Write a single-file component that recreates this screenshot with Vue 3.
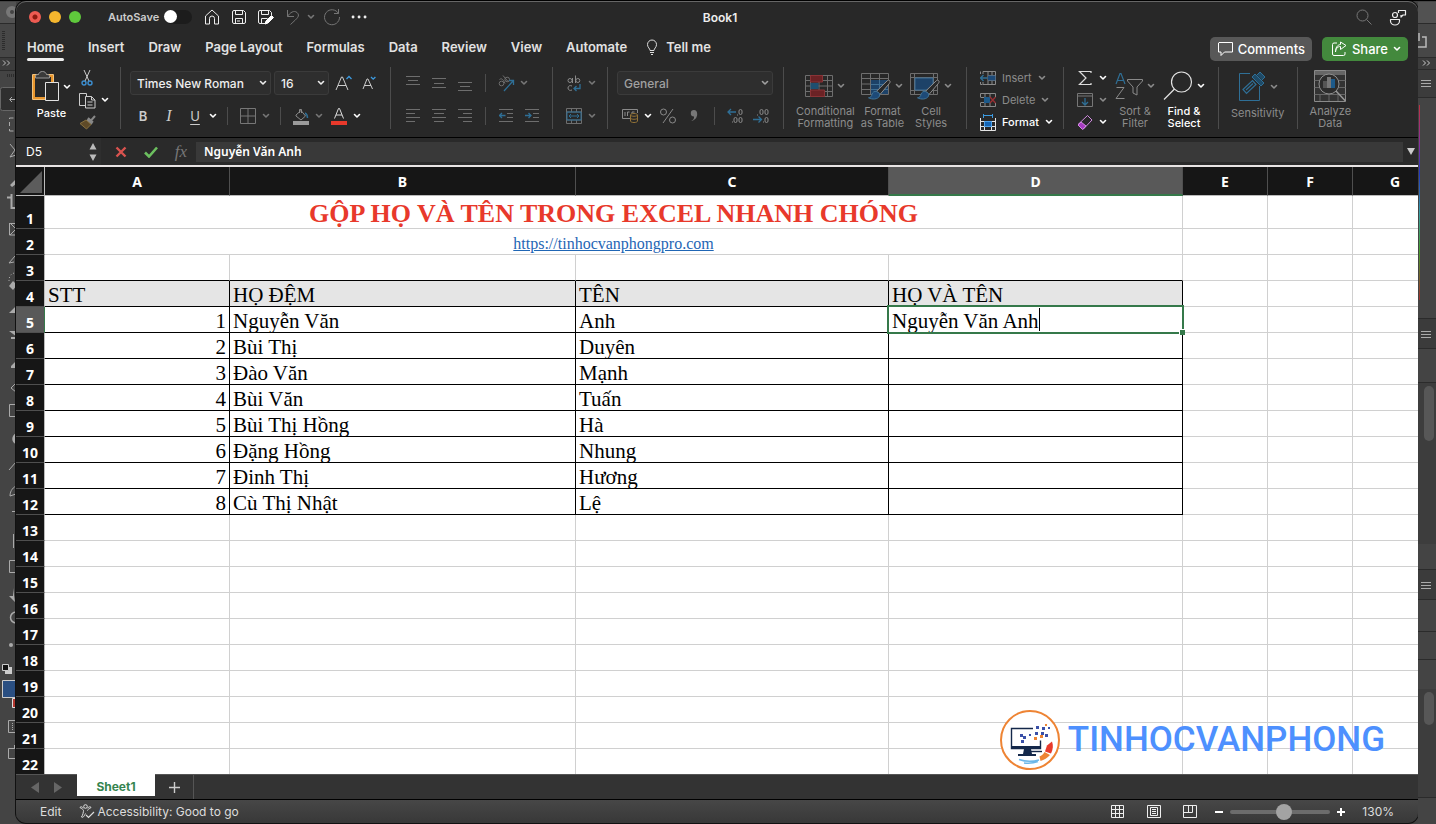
<script setup>
import { h, ref } from 'vue'

const g = '#8a8a8a'
const d = '#6e6e6e'
const b = '#2f6f96'
const grid = (c) => `<path d="M.5 .5h27v21h-27zM.5 5.5h27M.5 11h27M.5 16.5h27M5.5 .5v21M14 .5v21M22.5 .5v21" stroke="${c}"/>`
const brush = `<path d="M28.5 7.5c1 1 .6 2-.2 3L19 21.500l-3.500-3.200L26 8c1-.9 1.800-1.200 2.500-.5z" fill="#282828" stroke="#8f8f8f"/><path d="M15.500 18.500c-2-.5-4 .5-4.500 3-.4 2-1.500 3-3.500 3.300 3.500 2 9.500 1.700 11-1.800.5-1.400 0-2.500-.7-3.200z" fill="#1d4a78" stroke="#3f7296"/>`

const icons = {
  chev: [8, 6, `<path d="M1.500 1.500L4 4l2.500-2.500" stroke="currentColor" stroke-width="1.600" stroke-linecap="round" stroke-linejoin="round"/>`],
  home: [16, 16, `<path d="M1.500 7L8 1l6.500 6v8h-4V9.500a2.500 2.500 0 0 0-5 0V15h-4z" stroke="#eee" stroke-linejoin="round"/>`],
  save: [16, 16, `<path d="M3 1.500h9.500l2 2V13a1.500 1.500 0 0 1-1.500 1.500H3A1.500 1.500 0 0 1 1.500 13V3A1.500 1.500 0 0 1 3 1.500zM4.500 1.500v4h7v-4M4.500 14.500v-5h7v5M6 12h3" stroke="#eee"/>`],
  saveEdit: [18, 16, `<path d="M8 14.500H3A1.500 1.500 0 0 1 1.500 13V3A1.500 1.500 0 0 1 3 1.500h9.500l2 2V6M4.500 1.500v4h7v-4M4.500 14v-4.500h6" stroke="#eee"/><path d="M8 15l1-3 5.500-5.500 2 2L11 14z" fill="#fff" stroke="#fff"/>`],
  undo: [16, 16, `<path d="M2.500 1v6.500H9M2.500 7.500C5 3.500 9 1 12 3.500c3.500 3.500.5 5.500-6.500 12" stroke="#757575"/>`],
  redo: [18, 18, `<path d="M15.500 1v4.500H11M15.500 5.500A7.500 7.500 0 1 0 16.500 9" stroke="#757575"/>`],
  dots: [16, 4, `<path d="M2 2h.1M8 2h.1M14 2h.1" stroke="#eee" stroke-width="2.800" stroke-linecap="round"/>`],
  search: [16, 16, `<circle cx="6.500" cy="6.500" r="5.500" stroke="#777"/><path d="M10.500 10.500l5 5" stroke="#777"/>`],
  people: [18, 18, `<circle cx="6" cy="7" r="2.500" stroke="#eee" stroke-width="1.200"/><path d="M1.500 11.500h9v1.500a4.500 4 0 0 1-9 0zM9.500 5V2.500h7V7H14l-2 2V7" stroke="#eee" stroke-width="1.200" stroke-linejoin="round"/>`],
  bulb: [12, 16, `<path d="M4 11.500c0-2-2.500-3-2.500-6a4.500 4.500 0 0 1 9 0c0 3-2.500 4-2.500 6zM4 13.500h4M5 15.500h2" stroke="#ddd"/>`],
  comment: [17, 16, `<path d="M2 1.500h13.500v9.500H7.500L4 14.500V11H1.500V2z" stroke="#fff" stroke-linejoin="round"/>`],
  share: [16, 16, `<path d="M6 2H3A1.500 1.500 0 0 0 1.500 3.500v9.500A1.500 1.500 0 0 0 3 14.500h9.500A1.500 1.500 0 0 0 14 13v-2M4.500 11c.5-4 2.500-5.500 5-5.500v3L15 4.500 9.500 1v2.500C6 4 4.500 7 4.500 11z" stroke="#fff" stroke-linejoin="round"/>`],
  paste: [28, 32, `<path d="M2 5h18v22H2z" stroke="#e8962e" stroke-width="2"/><path d="M.5 3.500h21v25H.5z" stroke="#f2c27c"/><path d="M3.500 7V5c0-1 1-1.500 3-1.500C7 1.500 8.500.5 10.500.5s3.500 1 4 3c2 0 3 .5 3 1.500v2z" fill="#3a3a3a" stroke="#999"/><path d="M13.500 11.500h13v18h-13z" fill="#282828" stroke="#e2e2e2"/>`],
  cut: [12, 18, `<path d="M3 1l5 11M9 1L4 12" stroke="#ccc"/><circle cx="3" cy="14" r="2" stroke="#3d8fd1" stroke-width="1.400"/><circle cx="9" cy="14" r="2" stroke="#3d8fd1" stroke-width="1.400"/>`],
  copy: [17, 17, `<path d="M6 13.500H.5V1.500h7v3M6.500 4.500h6l3.500 3.500v8H6.500zM12.500 4.500V8H16M8.500 10h5M8.500 13h5" stroke="#ccc"/>`],
  painter: [17, 15, `<path d="M16 1l-4 4.500M9 3l5 4.500M8 4.500L13 9" stroke="#888" stroke-width="2"/><path d="M7 5L1 8.500 7.500 14l4.500-4.500z" fill="#5e4a28" stroke="#87703f"/>`],
  growA: [17, 18, `<path d="M1 16L6.500 3h1L13 16M3 11.500h8" stroke="#ccc"/><path d="M11.500 5L14 2.500 16.500 5" stroke="#3d9be0" stroke-width="1.300"/>`],
  shrinkA: [14, 16, `<path d="M1 14L5 4h1l4.500 10M2.500 10.500h6.500" stroke="#ccc"/><path d="M9 2l2.200 2.200L13.400 2" stroke="#3d9be0" stroke-width="1.300"/>`],
  border: [16, 16, `<path d="M.5 .5h15v15H.5zM8 .5v15M.5 8h15" stroke="#777"/>`],
  bucket: [16, 17, `<path d="M3 7l5-4.500L12.500 8 8 12 3 8zM6.500 5V1.500h2V5" stroke="#8a8a8a"/><path d="M12 5c2 1 2.500 3 2.500 5" stroke="#2f6f96" stroke-width="1.500"/><path d="M0 13h16v4H0z" fill="#9a9a9a"/>`],
  fontColor: [16, 17, `<path d="M3.500 10.500L7.500 .5h1l4 10M5 7h6" stroke="#ddd"/><path d="M0 13h16v4H0z" fill="#e8392b"/>`],
  top: [14, 16, `<path d="M0 1.500h14M2 5.500h10M0 9.500h14" stroke="${d}"/>`],
  mid: [14, 16, `<path d="M0 3.500h14M2 8.500h10M0 12.500h14" stroke="${d}"/>`],
  bot: [14, 16, `<path d="M0 7.500h14M2 11.500h10M0 15.500h14" stroke="${d}"/>`],
  left: [14, 14, `<path d="M0 .5h14M0 4.500h9M0 8.500h14M0 12.500h9" stroke="${d}"/>`],
  center: [14, 14, `<path d="M0 .5h14M2 4.500h10M0 8.500h14M2 12.500h10" stroke="${d}"/>`],
  right: [14, 14, `<path d="M0 .5h14M5 4.500h9M0 8.500h14M5 12.500h9" stroke="${d}"/>`],
  orient: [17, 17, `<circle cx="3.500" cy="8.500" r="2.300" stroke="${d}"/><path d="M1.500 4.500c2-1.500 3.500-.5 5.500 4M5 .5l5 6" stroke="${d}"/><circle cx="9.200" cy="4.500" r="2.300" stroke="${d}"/><path d="M6 16L15.500 5.500M11 5.500h4.500V10" stroke="${b}" stroke-width="1.300"/>`],
  outdent: [14, 14, `<path d="M0 .5h14M8 4.500h6M8 8.500h6M0 12.500h14" stroke="${d}"/><path d="M.5 6.500h6M3 4L.5 6.500 3 9" stroke="${b}" stroke-width="1.300"/>`],
  indent: [14, 14, `<path d="M0 .5h14M8 4.500h6M8 8.500h6M0 12.500h14" stroke="${d}"/><path d="M0 6.500h6M3.500 4L6 6.500 3.500 9" stroke="${b}" stroke-width="1.300"/>`],
  wrap: [14, 17, `<circle cx="3" cy="5.500" r="2" stroke="${g}"/><path d="M5.500 3v5M8.500 .5V8" stroke="${g}"/><circle cx="10.800" cy="5.500" r="2" stroke="${g}"/><path d="M5 11c-2-1-4 0-4 2s2 3 4 2" stroke="${g}"/><path d="M13 9v4.500H7M9.500 11L7 13.500 9.500 16" stroke="${b}" stroke-width="1.300"/>`],
  merge: [16, 16, `<path d="M.5 .5h15v15H.5zM.5 4h15M.5 12h15M5.500 .5V4M10.500 .5V4M5.500 12v3.500M10.500 12v3.500" stroke="${d}"/><path d="M1 4h14v8H1zM3 8h10M5 6L3 8l2 2M11 6l2 2-2 2" stroke="${b}"/>`],
  money: [17, 14, `<path d="M8 9.500H.5v-9h15V4M3 3v4M5.500 7V3h2M10 5.500V3h2.500" stroke="${g}"/><path d="M8.500 6c0-2 7-2 7 0v6c0 2-7 2-7 0zM8.500 6c0 1.700 7 1.700 7 0M8.500 9c0 1.700 7 1.700 7 0" fill="#282828" stroke="#937338"/>`],
  percent: [16, 16, `<circle cx="3.500" cy="4" r="3" stroke="${g}"/><circle cx="12.500" cy="12" r="3" stroke="${g}"/><path d="M13 1L3 15" stroke="${g}"/>`],
  comma: [10, 14, `<path d="M5 1a3.200 3.200 0 0 0 0 6.400c.3 2-.8 3.600-2.800 4.600 4-.5 6-4 6-7C8.200 2.500 7 1 5 1z" fill="#777"/>`],
  decInc: [16, 16, `<path d="M1 4h8M4 1L1 4l3 3" stroke="${b}" stroke-width="1.300"/><path d="M5 14h1M10 7h1" stroke="${g}"/><rect x="12" y="1.500" width="3" height="5" rx="1.500" stroke="${g}"/><rect x="7" y="9.500" width="3" height="5" rx="1.500" stroke="${g}"/><rect x="12" y="9.500" width="3" height="5" rx="1.500" stroke="${g}"/>`],
  decDec: [16, 16, `<path d="M0 11.500h8M5.500 8.500l3 3-3 3" stroke="${b}" stroke-width="1.300"/><path d="M4 7h1M10 14h1" stroke="${g}"/><rect x="7" y="1.500" width="3" height="5" rx="1.500" stroke="${g}"/><rect x="12" y="1.500" width="3" height="5" rx="1.500" stroke="${g}"/><rect x="12" y="9.500" width="3" height="5" rx="1.500" stroke="${g}"/>`],
  cond: [28, 26, `<g transform="translate(0 2)">${grid(d)}<path d="M5.500 .5h12v6.500h-12zM5.500 15h14v6.500h-14z" fill="#6b2225" stroke="#8a3336"/><path d="M5.500 8h8v6h-8z" fill="#1f4f70"/></g>`],
  fmtTable: [30, 28, `<g transform="translate(0 1)"><path d="M.5 .5h27v21h-27zM.5 5.500h27M.5 11h27M.5 16.500h27M9.500 .5v21M18.500 .5v21" stroke="${d}"/><path d="M10 7h17v14H10z" fill="#1d4268"/><path d="M10 11.500h17M10 16.500h17M18.500 7v14" stroke="#3f6f94"/>${brush}</g>`],
  cellStyles: [30, 28, `<g transform="translate(0 1)"><path d="M.5 .5h27v21h-27zM.5 4.500h27M.5 17.500h27M4.500 .5v21M23.500 .5v21" stroke="${d}"/><path d="M5 5h18v12H5z" fill="#1d4268" stroke="#3f6f94"/>${brush}</g>`],
  insert: [16, 14, `<path d="M3 3V.5h12.500v13H3V11M.5 .5V3M.5 11v2.500h2M8 .5v13M12 .5v13M8 4.500h7.500M8 9.500h7.500" stroke="${g}"/><path d="M8 4.500h7.500v5H8z" fill="#1d4a78"/><path d="M.5 7h7M3.500 4l-3 3 3 3" stroke="${b}" stroke-width="1.300"/>`],
  del: [16, 14, `<path d="M.5 4V.5h15V4M.5 10v3.500h15V10M5 .5V4M10 .5V4M5 10v3.500M10 10v3.500M.5 4.500H4M.5 9.500H4" stroke="${g}"/><path d="M4 4h6v6H4z" fill="#1d5a8a"/><path d="M10 4l5.500 6M15.500 4L10 10" stroke="#9c3034" stroke-width="1.300"/>`],
  format: [16, 17, `<path d="M3.500 0v4M12.500 0v4M3.500 1.500h9" stroke="#3d9be0"/><path d="M.5 4v12.500h15V4M.5 7.500h15M.5 12.500h15M4.500 7v9M11.500 7v9" stroke="#e4e4e4"/><path d="M4.500 7.500h7v5h-7z" fill="#1464b4" stroke="#4ca0e8"/>`],
  sum: [14, 16, `<path d="M13 3V1.500H1.500L8 8l-6.500 6.500H13V13" stroke="#ddd" stroke-width="1.200"/>`],
  fill: [16, 14, `<path d="M.5 .5h15v13H.5zM.5 3h15" stroke="#777"/><path d="M8 5v7M5 9l3 3 3-3" stroke="${b}" stroke-width="1.300"/>`],
  eraser: [16, 15, `<path d="M10.500 .5l4.500 4.500-8.500 9L1 9.500z" stroke="#d08be0"/><path d="M4 7L1 10l4.500 4.500L9 11z" fill="#a73bc0" stroke="#d08be0"/>`],
  sort: [28, 28, `<path d="M1 12L5 1.500h1L10 12M2.500 8.500h6" stroke="${b}" stroke-width="1.200"/><path d="M1.500 15.500h7.500L1 26.500h8.500" stroke="${g}"/><path d="M12.500 7.500h15v1.500l-5.500 6v8l-4-2v-6L12.500 9z" stroke="${g}"/>`],
  find: [30, 30, `<circle cx="18.500" cy="11" r="10" stroke="#e2e2e2" stroke-width="1.200"/><path d="M11.500 18L1 28.500" stroke="#e2e2e2" stroke-width="1.200"/>`],
  sens: [28, 32, `<path d="M12 2.500H1.500v27h20V15" stroke="${b}"/><path d="M5 18.500l9.500-9 3.500 4-9.500 9zM8 19l7-6.500" stroke="${b}" stroke-width="1.200"/><path d="M14 6l3-3 9 9-3 3zM19 4l3-3 5 5-3 3" fill="#1f4a66" stroke="${b}"/>`],
  analyze: [32, 32, `<path d="M.5 .5h31v31H.5z" fill="#333" stroke="${g}"/><path d="M1 3h30" stroke="#666" stroke-width="4"/><path d="M.5 10.500h31M.5 17.500h31M.5 24.500h31M6 24v7M15 24v7M24 24v7" stroke="#666"/><circle cx="15" cy="14" r="10" fill="#2c2c2c" stroke="#909090"/><path d="M22 21l9.500 10" stroke="#999" stroke-width="1.500"/><path d="M9 11h4v7H9z" fill="#555"/><path d="M13 7h4v11h-4z" fill="#777"/><path d="M17 9h4v9h-4z" fill="#1d5a8a"/>`],
  acc: [16, 15, `<circle cx="6.500" cy="2.500" r="1.800" stroke="#ddd"/><path d="M1 3.500c2 1.500 3.500 2 3.500 3s-.5 4.500-2 6.500c1.500 1 2.500-.5 4-3.500M12 3.500c-2 1.500-3.500 2-3.500 3M1 3.500C1.500 2 3 3 4.500 4M12 3.500C11.500 2 10 3 8.500 4" stroke="#ddd"/><path d="M7 11l2.500 2.500L15 8" stroke="#ddd" stroke-width="1.200"/>`],
  vGrid: [14, 14, `<path d="M.5 .5h12v12H.5zM4.500 .5v12M8.500 .5v12M.5 4.500h12M.5 8.500h12" stroke="#eee"/>`],
  vPage: [14, 14, `<path d="M.5 .5h13v12H.5zM3.500 2.500h7v8h-7zM5 4.500h4M5 6.500h4M5 8.500h4" stroke="#eee"/>`],
  vBreak: [14, 14, `<path d="M.5 .5h13v12H.5zM5.500 .5v7M.5 7.500h9M9.500 .5v7" stroke="#eee"/>`],
  cancel: [12, 12, `<path d="M1.500 1.500l9 9M10.500 1.500l-9 9" stroke="#d9534f" stroke-width="2.400"/>`],
  accept: [14, 12, `<path d="M1 6.500L5 10.500 13 1.500" stroke="#6cbf5f" stroke-width="2.600"/>`],
  updown: [8, 18, `<path d="M4 0l3.500 6.500h-7zM4 18L.5 11.500h7z" fill="#bbb"/>`]
}

const Icon = (props) => {
  const [w, ht, body] = icons[props.n]
  return h('svg', { width: w, height: ht, viewBox: `0 0 ${w} ${ht}`, fill: 'none', 'aria-hidden': 'true', innerHTML: body })
}
Icon.props = ['n']

const tabs = ['Home', 'Insert', 'Draw', 'Page Layout', 'Formulas', 'Data', 'Review', 'View', 'Automate']
const columns = ['A', 'B', 'C', 'D', 'E', 'F', 'G']
const people = [
  ['Nguyễn Văn', 'Anh'],
  ['Bùi Thị', 'Duyên'],
  ['Đào Văn', 'Mạnh'],
  ['Bùi Văn', 'Tuấn'],
  ['Bùi Thị Hồng', 'Hà'],
  ['Đặng Hồng', 'Nhung'],
  ['Đinh Thị', 'Hương'],
  ['Cù Thị Nhật', 'Lệ']
]
const emptyRows = [13, 14, 15, 16, 17, 18, 19, 20, 21, 22]
const entry = ref('Nguyễn Văn Anh')
const font = ref('Times New Roman')
const size = ref('16')
const numberFormat = ref('General')
const autosave = ref(false)
const zoom = ref(54)
</script>

<template>
  <div class="desktop">
    <div class="strip">
      <svg width="16" height="824" viewBox="0 0 16 824" fill="none" aria-hidden="true">
        <path d="M0 2h16v21H0z" fill="#525252" />
        <path d="M0 24h16v33H0z" fill="#474747" />
        <path d="M0 58h16v12H0z" fill="#3c3c3c" />
        <path d="M0 23.500h16M0 57.500h16M0 70.500h16" stroke="#2b2b2b" />
        <circle cx="12" cy="12" r="6" fill="#777" /><circle cx="12" cy="12" r="2" fill="#444" />
        <path d="M3.500 31v19" stroke="#2c2c2c" stroke-width="3" stroke-dasharray="1 1" />
        <path d="M3 60.500l2.500 2.500L3 65.500M7 60.500L9.500 63 7 65.500" stroke="#bbb" />
        <path d="M7 75.500h9" stroke="#2c2c2c" stroke-width="3" stroke-dasharray="1 1" />
        <rect x=".5" y="87.500" width="20" height="23" rx="2" fill="#2f2f2f" stroke="#666" />
        <path d="M10 99.500h6M12 97l-2.500 2.500L12 102" stroke="#aaa" />
        <path d="M9.500 119v-1h4M9.500 122v4M9.500 129v2h4" stroke="#aaa" />
        <path d="M10 144l5 6-5 7 6-2" stroke="#aaa" />
        <path d="M10 185l6-6v5l-4 3zM10 312l6-6v7H9zM11 366l5-5v7h-5z" fill="#aaa" />
        <path d="M7 197.500h5M11.500 194v14H16" stroke="#aaa" stroke-width="2" />
        <path d="M9.500 223.500h7M9.500 223v12h7M10 223l6 6-6 6" stroke="#aaa" />
        <path d="M15 256l-6 7 5-1" stroke="#aaa" />
        <path d="M9 281c0-9 7-8 7-8" stroke="#aaa" stroke-dasharray="1 2" /><path d="M9 286l4-5 4 4-4 5z" fill="#aaa" />
        <path d="M16 332h-4l4 3M11 338h5" stroke="#aaa" stroke-width="2" />
        <path d="M16 383l-5 5 5 4M9.500 404.500h8v12h-8zM9 470l7-8M10 496c0-6 4-9 6-10M10 496l6-2M12 511.500h4M13.500 534v14M9.500 560.500h8v12h-8z" stroke="#aaa" />
        <path d="M16 433c-5 3-5 9 0 11zM13 588v8h-4l6 6z" fill="#aaa" />
        <path d="M16 612a5.500 5.500 0 0 0 0 11" stroke="#aaa" stroke-width="1.500" />
        <circle cx="11" cy="645" r="2" fill="#aaa" />
        <path d="M5 667h7v7H5z" fill="#ccc" /><path d="M2.500 664.500h6v6h-6z" fill="#111" stroke="#ccc" />
        <path d="M12.500 698.500h5v9h-5z" fill="#b3362e" stroke="#ddd" />
        <path d="M2.500 680.500h16v17h-16z" fill="#2a4f82" stroke="#ccc" />
        <path d="M8.500 720.500h9v12h-9zM8.500 748.500h9v10h-9zM14.500 745v4" stroke="#aaa" />
        <path d="M12.500 723v7" stroke="#aaa" stroke-dasharray="1 1" />
      </svg>
    </div>

    <div class="window">
      <header class="titlebar">
        <div class="title-left">
          <span class="light red"></span><span class="light amber"></span><span class="light green"></span>
          <label class="autosave">AutoSave<input v-model="autosave" type="checkbox" class="toggle" /></label>
          <button class="tool" aria-label="Home"><Icon n="home" /></button>
          <button class="tool" aria-label="Save"><Icon n="save" /></button>
          <button class="tool" aria-label="Save a copy"><Icon n="saveEdit" /></button>
          <button class="tool" aria-label="Undo"><Icon n="undo" /></button>
          <button class="arrow dim slim" aria-label="Undo options"><Icon n="chev" /></button>
          <button class="tool" aria-label="Redo"><Icon n="redo" /></button>
          <button class="tool" aria-label="More"><Icon n="dots" /></button>
        </div>
        <div class="title">Book1</div>
        <div class="title-right">
          <button class="tool" aria-label="Search"><Icon n="search" /></button>
          <button class="tool" aria-label="Presence"><Icon n="people" /></button>
        </div>
      </header>

      <nav class="tabs">
        <button v-for="t in tabs" :key="t" class="tab" :class="{ active: t === 'Home' }">{{ t }}</button>
        <button class="tab tell"><Icon n="bulb" />Tell me</button>
        <span class="grow"></span>
        <button class="pill comments"><Icon n="comment" />Comments</button>
        <button class="pill share"><Icon n="share" />Share<Icon n="chev" /></button>
      </nav>

      <div class="ribbon">
        <div class="group clip">
          <button class="big lit"><span class="pic"><Icon n="paste" /><Icon n="chev" /></span>Paste</button>
          <div class="stack">
            <button class="mini" aria-label="Cut"><span class="slot"><Icon n="cut" /></span></button>
            <button class="mini lit" aria-label="Copy"><span class="slot"><Icon n="copy" /></span><Icon n="chev" /></button>
            <button class="mini" aria-label="Format Painter"><span class="slot"><Icon n="painter" /></span></button>
          </div>
        </div>
        <div class="group rows font-group">
          <div class="row">
            <span class="drop name"><select v-model="font" aria-label="Font"><option>Times New Roman</option></select><Icon n="chev" /></span>
            <span class="drop size"><select v-model="size" aria-label="Font size"><option>16</option></select><Icon n="chev" /></span>
            <button class="ib" aria-label="Increase font size"><Icon n="growA" /></button>
            <button class="ib" aria-label="Decrease font size"><Icon n="shrinkA" /></button>
          </div>
          <div class="row">
            <button class="ib bold">B</button><button class="ib ital">I</button><button class="ib under">U</button>
            <button class="arrow" aria-label="Underline options"><Icon n="chev" /></button>
            <i class="bar"></i>
            <button class="ib" aria-label="Borders"><Icon n="border" /></button><button class="arrow dim" aria-label="Border options"><Icon n="chev" /></button>
            <i class="bar"></i>
            <button class="ib" aria-label="Fill colour"><Icon n="bucket" /></button><button class="arrow dim spaced" aria-label="Fill options"><Icon n="chev" /></button>
            <button class="ib" aria-label="Font colour"><Icon n="fontColor" /></button><button class="arrow" aria-label="Font colour options"><Icon n="chev" /></button>
          </div>
        </div>
        <div class="group rows align-group">
          <div class="row">
            <button class="ib" aria-label="Top align"><Icon n="top" /></button><button class="ib" aria-label="Middle align"><Icon n="mid" /></button><button class="ib" aria-label="Bottom align"><Icon n="bot" /></button>
            <i class="bar"></i>
            <button class="ib" aria-label="Orientation"><Icon n="orient" /></button><button class="arrow dim" aria-label="Orientation options"><Icon n="chev" /></button>
          </div>
          <div class="row">
            <button class="ib" aria-label="Align left"><Icon n="left" /></button><button class="ib" aria-label="Center"><Icon n="center" /></button><button class="ib" aria-label="Align right"><Icon n="right" /></button>
            <i class="bar"></i>
            <button class="ib" aria-label="Decrease indent"><Icon n="outdent" /></button><button class="ib" aria-label="Increase indent"><Icon n="indent" /></button>
          </div>
        </div>
        <div class="group rows wrap-group">
          <div class="row"><button class="ib" aria-label="Wrap text"><Icon n="wrap" /></button><button class="arrow dim" aria-label="Wrap options"><Icon n="chev" /></button></div>
          <div class="row"><button class="ib" aria-label="Merge"><Icon n="merge" /></button><button class="arrow dim" aria-label="Merge options"><Icon n="chev" /></button></div>
        </div>
        <div class="group rows number-group">
          <div class="row">
            <span class="drop number"><select v-model="numberFormat" aria-label="Number format"><option>General</option></select><Icon n="chev" /></span>
          </div>
          <div class="row">
            <button class="ib" aria-label="Currency"><Icon n="money" /></button><button class="arrow spaced" aria-label="Currency options"><Icon n="chev" /></button>
            <button class="ib" aria-label="Percent"><Icon n="percent" /></button><button class="ib" aria-label="Comma style"><Icon n="comma" /></button>
            <i class="bar"></i>
            <button class="ib" aria-label="Increase decimal"><Icon n="decInc" /></button><button class="ib" aria-label="Decrease decimal"><Icon n="decDec" /></button>
          </div>
        </div>
        <div class="group bigs styles-group">
          <button class="big"><span class="pic"><Icon n="cond" /><Icon n="chev" /></span>Conditional<br />Formatting</button>
          <button class="big"><span class="pic"><Icon n="fmtTable" /><Icon n="chev" /></span>Format<br />as Table</button>
          <button class="big"><span class="pic"><Icon n="cellStyles" /><Icon n="chev" /></span>Cell<br />Styles</button>
        </div>
        <div class="group cells-group">
          <div class="stack">
            <button class="mini"><Icon n="insert" />Insert<Icon n="chev" /></button>
            <button class="mini"><Icon n="del" />Delete<Icon n="chev" /></button>
            <button class="mini lit"><Icon n="format" />Format<Icon n="chev" /></button>
          </div>
        </div>
        <div class="group bigs edit-group">
          <div class="stack">
            <button class="mini lit" aria-label="AutoSum"><span class="slot"><Icon n="sum" /></span><Icon n="chev" /></button>
            <button class="mini" aria-label="Fill"><span class="slot"><Icon n="fill" /></span><Icon n="chev" /></button>
            <button class="mini lit" aria-label="Clear"><span class="slot"><Icon n="eraser" /></span><Icon n="chev" /></button>
          </div>
          <button class="big"><span class="pic"><Icon n="sort" /><Icon n="chev" /></span>Sort &amp;<br />Filter</button>
          <button class="big lit"><span class="pic"><Icon n="find" /><Icon n="chev" /></span>Find &amp;<br />Select</button>
        </div>
        <div class="group bigs">
          <button class="big"><span class="pic"><Icon n="sens" /><Icon n="chev" /></span>Sensitivity</button>
        </div>
        <div class="group bigs last">
          <button class="big"><span class="pic"><Icon n="analyze" /></span>Analyze<br />Data</button>
        </div>
      </div>

      <div class="formula">
        <div class="namebox"><input value="D5" aria-label="Name box" /><Icon n="updown" /></div>
        <button class="fbtn" aria-label="Cancel"><Icon n="cancel" /></button>
        <button class="fbtn" aria-label="Enter"><Icon n="accept" /></button>
        <button class="fbtn fx" aria-label="Insert function">fx</button>
        <input v-model="entry" class="fx-input" aria-label="Formula bar" />
        <button class="expand" aria-label="Expand formula bar"><svg width="8" height="7" viewBox="0 0 8 7"><path d="M0 0h8L4 7z" fill="#ccc" /></svg></button>
      </div>

      <main class="sheet">
        <table>
          <colgroup><col class="cn" /><col class="ca" /><col class="cb" /><col class="cc" /><col class="cd" /><col class="ce" /><col class="ce" /><col class="ce" /></colgroup>
          <thead>
            <tr>
              <th class="corner"><svg width="22" height="22" viewBox="0 0 22 22"><path d="M22 0v22H0z" fill="#5c5c5c" /></svg></th>
              <th v-for="c in columns" :key="c" :class="{ sel: c === 'D' }">{{ c }}</th>
            </tr>
          </thead>
          <tbody>
            <tr class="first"><th>1</th><td colspan="4" class="heading">GỘP HỌ VÀ TÊN TRONG EXCEL NHANH CHÓNG</td><td></td><td></td><td></td></tr>
            <tr><th>2</th><td colspan="4" class="link"><a href="https://tinhocvanphongpro.com">https://tinhocvanphongpro.com</a></td><td></td><td></td><td></td></tr>
            <tr class="above"><th>3</th><td></td><td></td><td></td><td></td><td></td><td></td><td></td></tr>
            <tr class="data head"><th>4</th><td>STT</td><td>HỌ ĐỆM</td><td>TÊN</td><td>HỌ VÀ TÊN</td><td></td><td></td><td></td></tr>
            <tr v-for="(p, i) in people" :key="i" class="data">
              <th :class="{ sel: i === 0 }">{{ i + 5 }}</th>
              <td class="num">{{ i + 1 }}</td>
              <td>{{ p[0] }}</td>
              <td>{{ p[1] }}</td>
              <td v-if="i === 0" class="editing"><span class="edit"><input v-model="entry" aria-label="Cell D5" /><i class="caret"></i></span><i class="handle"></i></td>
              <td v-else></td>
              <td></td><td></td><td></td>
            </tr>
            <tr v-for="n in emptyRows" :key="n"><th>{{ n }}</th><td></td><td></td><td></td><td></td><td></td><td></td><td></td></tr>
          </tbody>
        </table>
        <div class="brand">
          <svg width="60" height="60" viewBox="0 0 60 60" fill="none" aria-hidden="true">
            <circle cx="30" cy="30" r="29" fill="#fff" stroke="#ee8434" stroke-width="2" />
            <path d="M33 18.500H11.500v20h29v-8" stroke="#14284a" stroke-width="1.400" /><path d="M11 36h30v3H11z" fill="#14284a" />
            <path d="M24 39h7l1 5h4v2H18v-2h5z" fill="#14284a" /><path d="M29 41.500h13" stroke="#14284a" stroke-width="1.400" />
            <path d="M20 24h3v3h-3zM23 26h3v3h-3zM21 30h3v3h-3zM29 24h2v2h-2zM35 22h3v3h-3zM36 16h3v3h-3zM42 17h3v3h-3zM41 22h3v3h-3zM45 24h3v3h-3zM48 17h2v2h-2z" fill="#3a50a8" />
            <path d="M34 27h3v3h-3zM40 25h3v3h-3zM45 14h2v2h-2z" fill="#ee8434" />
            <path d="M52 31.500l-5 4-2 6 6 2c2-4 2.500-8 1-12z" fill="#e8392b" /><path d="M44.500 42l5.500 3c-2.500 3-6 5-9.500 6l-1-4.500c2-1 4-2.500 5-4.500z" fill="#ee8434" />
            <path d="M19 49.500c7 2.500 13 2.500 20 .5M24 53c5 .6 10 0 14-1.500" stroke="#6bb7e8" stroke-width="1.500" />
          </svg>
          <span>TINHOCVANPHONG</span>
        </div>
      </main>

      <div class="sheetbar">
        <button class="nav" aria-label="Previous sheet"><svg width="8" height="11" viewBox="0 0 8 11"><path d="M8 0v11L0 5.500z" fill="#666" /></svg></button>
        <button class="nav" aria-label="Next sheet"><svg width="8" height="11" viewBox="0 0 8 11"><path d="M0 0v11l8-5.500z" fill="#666" /></svg></button>
        <button class="sheet-tab">Sheet1</button>
        <button class="add" aria-label="New sheet"><svg width="11" height="11" viewBox="0 0 11 11"><path d="M5.500 0v11M0 5.500h11" stroke="#ccc" stroke-width="1.400" /></svg></button>
      </div>

      <footer class="status">
        <span class="mode">Edit</span>
        <button class="acc"><Icon n="acc" />Accessibility: Good to go</button>
        <span class="grow"></span>
        <button class="view" aria-label="Normal view"><Icon n="vGrid" /></button>
        <button class="view" aria-label="Page layout view"><Icon n="vPage" /></button>
        <button class="view" aria-label="Page break view"><Icon n="vBreak" /></button>
        <button class="step" aria-label="Zoom out"><svg width="8" height="8" viewBox="0 0 8 8"><path d="M0 4h8" stroke="#fff" stroke-width="2" /></svg></button>
        <input v-model="zoom" type="range" min="0" max="100" class="zoom" aria-label="Zoom" />
        <button class="step" aria-label="Zoom in"><svg width="8" height="8" viewBox="0 0 8 8"><path d="M0 4h8M4 0v8" stroke="#fff" stroke-width="2" /></svg></button>
        <span class="pct">130%</span>
      </footer>
    </div>

    <div class="strip">
      <svg width="18" height="824" viewBox="0 0 18 824" fill="none" aria-hidden="true">
        <defs><linearGradient id="hue" x1="0" y1="0" x2="0" y2="1"><stop offset="0" stop-color="#c03040" /><stop offset=".2" stop-color="#8a2fa0" /><stop offset=".35" stop-color="#2036c0" /><stop offset=".55" stop-color="#3aa0a8" /><stop offset=".75" stop-color="#4aa030" /><stop offset="1" stop-color="#a03030" /></linearGradient></defs>
        <path d="M0 2h18v21H0z" fill="#525252" /><path d="M0 24h18v33H0z" fill="#474747" /><path d="M0 58h18v39H0z" fill="#3c3c3c" />
        <path d="M0 318h18v30H0zM0 569h18v30H0z" fill="#3b3b3b" />
        <path d="M0 382h18v162H0zM0 689h18v108H0z" fill="#3d3d3d" />
        <path d="M0 23.500h18M0 57.500h18M0 69.500h18M0 97.500h18M0 318.500h18M0 348.500h18M0 382.500h18M0 569.500h18M0 599.500h18M0 631.500h18M0 659.500h18M0 797.500h18" stroke="#2b2b2b" />
        <path d="M1 105h1v195H1z" fill="url(#hue)" />
        <path d="M4 37h4v10H0M1 33v8" stroke="#bbb" stroke-width="1.500" />
        <path d="M5 60.500L7.500 63 5 65.500M9 60.500l2.500 2.500L9 65.500" stroke="#ccc" />
        <path d="M3 80.500h10M3 83.500h10M3 86.500h10M3 331.500h10M3 334.500h10M3 337.500h10M3 582.500h10M3 585.500h10M3 588.500h10" stroke="#aaa" />
        <rect x="6" y="386" width="10" height="55" rx="5" fill="#575757" /><rect x="6" y="692" width="10" height="33" rx="5" fill="#575757" />
      </svg>
    </div>
  </div>
</template>

<style>
html, body { background: #000; }
</style>

<style scoped>
* { box-sizing: border-box; }
.desktop {
  display: grid;
  grid-template-columns: 16px minmax(0, 1fr) 18px;
  height: 100vh;
  overflow: hidden;
  background: #434343;
  border-top: 1px solid #000;
  font-family: Inter, "Liberation Sans", sans-serif;
  color: #e6e6e6;
}
.strip { overflow: hidden; background: #444; }
.strip svg { display: block; margin-top: -1px; }
button { border: 0; padding: 0; background: none; color: inherit; font: inherit; display: flex; align-items: center; justify-content: center; }
input, select { font: inherit; color: inherit; border: 0; margin: 0; padding: 0; background: none; outline: 0; min-width: 0; }
svg { flex: none; }
.grow { flex: 1; }

.window {
  display: flex;
  flex-direction: column;
  min-width: 0;
  margin-bottom: 1px;
  background: #282828;
  border-radius: 10px;
  overflow: hidden;
  box-shadow: inset 0 1px 0 #666, 0 0 0 1px #111;
}

.titlebar { display: grid; grid-template-columns: 1fr auto 1fr; align-items: center; height: 32px; padding: 0 7px 0 13px; }
.title-left, .title-right { display: flex; align-items: center; }
.title-left { margin-right: -6px; }
.title-right { justify-content: flex-end; gap: 7px; }
.title { font-size: 12px; font-weight: 600; color: #eee; }
.light { width: 12px; height: 12px; border-radius: 6px; margin-right: 8px; }
.red { background: radial-gradient(circle, #8c1a10 2px, #ed5b52 3px); }
.amber { background: #f5b62e; }
.green { background: #5fc83c; }
.autosave { display: flex; align-items: center; gap: 5px; margin: 0 6px 0 19px; font-size: 11px; font-weight: 600; color: #ccc; }
.toggle { appearance: none; width: 28px; height: 14px; border-radius: 7px; background: #1c1c1c; }
.toggle::before { content: ""; display: block; width: 13px; height: 13px; border-radius: 7px; background: #fff; }
.tool { width: 27px; height: 24px; flex: none; }

.tabs { display: flex; align-items: center; height: 31px; padding: 0 10px 0 11px; gap: 24px; }
.tab { position: relative; height: 28px; margin-bottom: 3px; font-size: 13px; font-weight: 600; white-space: nowrap; color: #e2e2e2; }
.active::after { content: ""; position: absolute; left: 0; right: 0; bottom: 0; height: 3px; border-radius: 2px; background: #eee; }
.tell { gap: 8px; margin-left: -5px; }
.pill { height: 24px; border-radius: 5px; font-size: 13px; font-weight: 500; color: #fff; gap: 4px; padding: 0 7px; }
.comments { background: #585858; }
.share { background: #43893d; margin-left: -14px; gap: 5px; padding: 0 7px 0 9px; }

.ribbon { display: flex; padding: 3px 0 8px; border-bottom: 1px solid #000; }
.group { display: flex; flex: none; height: 62px; border-right: 1px solid #4c4c4c; }
.last { border: 0; }
.rows { flex-direction: column; gap: 9px; padding-top: 4px; }
.row { display: flex; align-items: center; height: 24px; }
.clip { width: 105px; padding-left: 16px; gap: 8px; }
.font-group { width: 270px; padding-left: 9px; }
.align-group { width: 162px; padding-left: 9px; }
.wrap-group { width: 55px; padding-left: 8px; }
.number-group { width: 176px; padding-left: 9px; }
.bigs { padding: 0 12px; gap: 8px; }
.styles-group { width: 183px; gap: 6px; }
.cells-group { width: 97px; padding-left: 13px; }
.edit-group { width: 155px; padding-left: 13px; }
.ib { width: 26px; height: 24px; flex: none; }
.arrow { width: 10px; height: 24px; flex: none; color: #fff; }
.dim { color: #777; }
.spaced { margin-right: 2px; }
.slim { margin-right: 2px; }
.bar { width: 1px; height: 18px; background: #4c4c4c; margin: 0 7px; flex: none; }
.font-group .bar { margin-left: 9px; }
.bold { font-size: 13px; font-weight: 600; color: #ccc; }
.ital { font: italic 16px "Liberation Serif", serif; color: #ccc; }
.under { font-size: 13px; text-decoration: underline; text-underline-offset: 3px; color: #ccc; }
.drop { display: flex; align-items: center; height: 24px; padding: 0 3px 0 6px; margin-right: 3px; background: #2e2e2e; border: 1px solid #3b3b3b; border-radius: 3px; font-size: 12px; font-weight: 500; color: #eee; }
.drop select { appearance: none; flex: 1; }
.name { width: 141px; }
.size { width: 55px; margin-right: 1px; }
.number { width: 156px; color: #a0a0a0; }
.big { flex-direction: column; justify-content: flex-start; font-size: 11px; line-height: 12px; color: #8c8c8c; text-align: center; white-space: nowrap; }
.pic { display: flex; align-items: center; gap: 4px; height: 40px; padding-bottom: 1px; }
.clip .pic { gap: 3px; }
.lit { color: #fff; font-weight: 500; }
.stack { display: flex; flex-direction: column; }
.mini { flex: none; height: 22px; gap: 6px; justify-content: flex-start; font-size: 11px; color: #8c8c8c; }
.mini.lit { color: #fff; }
.slot { display: flex; justify-content: center; width: 16px; }

.formula { display: flex; align-items: center; height: 27px; background: #2a2a2a; font-family: "Noto Sans", "Open Sans", sans-serif; color: #fff; }
.namebox { display: flex; align-items: center; width: 85px; padding: 0 4px 0 10px; font: 12px Inter, sans-serif; background: #2e2e2e; height: 100%; }
.namebox input { flex: 1; }
.fbtn { width: 30px; height: 24px; }
.namebox + .fbtn { margin-left: 5px; }
.fx { font: italic 17px "Liberation Serif", serif; color: #777; }
.fx-input { flex: 1; height: 20px; padding-left: 8px; background: #393939; font-size: 12px; font-weight: 600; }
.expand { width: 15px; height: 24px; }

.sheet { position: relative; flex: 1; min-height: 0; overflow: hidden; background: #fff; border-top: 2px solid #e8e4e4; }
table { width: 1422px; table-layout: fixed; border-collapse: separate; border-spacing: 0; color: #000; }
.cn { width: 29px; } .ca { width: 185px; } .cb { width: 346px; } .cc { width: 313px; } .cd { width: 294px; } .ce { width: 85px; }
th, td { height: 26px; padding: 0; border-right: 1px solid #d0d0d0; border-bottom: 1px solid #d0d0d0; overflow: hidden; white-space: nowrap; }
th { font: 700 14px/18px "Noto Sans", "Open Sans", sans-serif; color: #fff; background: #161616; border-color: #4f4f4f; }
thead th { height: 29px; padding-top: 2px; border-bottom-color: #bbb; }
tbody th { vertical-align: bottom; border-right-color: #bbb; }
thead .corner { padding: 0; border-right-color: #bbb; }
.corner svg { display: block; margin: 2px 2px 0 4px; }
thead .sel { background: #595959; border-bottom: 2px solid #35794a; }
tbody .sel { background: #595959; border-right: 1px solid #35794a; }
.first th, .first td { height: 33px; }
td { font: 21px/22px "Liberation Serif", "Times New Roman", serif; vertical-align: bottom; }
.heading { text-align: center; font-size: 26px; line-height: 29px; font-weight: 700; color: #e8392b; }
.link { text-align: center; font-size: 16px; line-height: 20px; }
.link a { color: #1f66b5; }
.above td:nth-child(-n+5) { border-bottom-color: #000; }
.data td:nth-child(-n+5) { border-color: #000; padding: 0 3px; }
.head td:nth-child(-n+5) { background: #e5e5e5; }
.data .num { text-align: right; }
.data .editing { position: relative; overflow: visible; }
.editing::after { content: ""; position: absolute; inset: -2px; border: 2px solid #35794a; pointer-events: none; }
.edit { display: flex; align-items: center; height: 25px; }
.edit input { field-sizing: content; height: 25px; padding-top: 3px; line-height: 22px; }
.caret { width: 1px; height: 23px; background: #000; }
.handle { position: absolute; z-index: 1; right: -3px; bottom: -3px; width: 6px; height: 6px; background: #35794a; border: solid #fff; border-width: 1px 0 0 1px; }

.brand { position: absolute; right: 33px; bottom: 4px; display: flex; align-items: center; gap: 8px; font: 500 35px/60px Roboto, sans-serif; color: #4d90fe; }

.sheetbar { display: flex; height: 26px; background: #333; border-top: 1px solid #555; border-bottom: 1px solid #000; }
.nav { width: 23px; }
.nav:first-child { margin-left: 7px; }
.sheet-tab { width: 78px; height: 22px; margin: -1px 0 0 8px; padding-top: 2px; background: #fff; font-size: 12px; font-weight: 700; color: #35854f; }
.add { width: 39px; border-right: 1px solid #555; }

.status { display: flex; align-items: center; height: 23px; padding: 0 24px; background: linear-gradient(#474747, #383838); font-size: 12px; color: #ddd; }
.mode { margin-right: 18px; }
.acc { gap: 2px; }
.view { width: 36px; height: 22px; }
.step { width: 22px; height: 22px; }
.zoom { appearance: none; width: 100px; height: 16px; }
.zoom::-webkit-slider-runnable-track { height: 4px; border-radius: 2px; background: #6c6c6c; }
.zoom::-webkit-slider-thumb { appearance: none; width: 16px; height: 16px; margin-top: -6px; border-radius: 8px; background: #a3a3a3; }
.pct { margin-left: 10px; }
</style>
